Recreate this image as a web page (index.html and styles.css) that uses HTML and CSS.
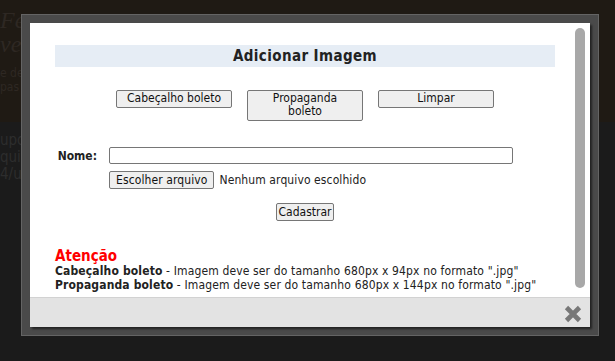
FILE: index.html
```html
<!DOCTYPE html>
<html lang="pt-BR">
<head>
<meta charset="utf-8">
<title>Adicionar Imagem</title>
<link rel="stylesheet" href="styles.css">
</head>
<body>
<div class="page">
  <div class="page-hero">
    <div class="hero-title">Fe</div>
    <div class="hero-title hero-title-2">ver</div>
    <div class="hero-sub">e desc<br>pas d</div>
  </div>
  <div class="page-body">
    <p>upo<br>quiv<br>4/up</p>
  </div>
</div>

<div class="modal">
  <div class="panel">
    <div class="scroll-area">
      <div class="content">
        <h2 class="title">Adicionar Imagem</h2>
        <div class="btn-row">
          <button class="btn btn-wide" type="button">Cabeçalho boleto</button>
          <button class="btn btn-wide" type="button">Propaganda<br>boleto</button>
          <button class="btn btn-wide" type="button">Limpar</button>
        </div>
        <form class="form">
          <div class="form-grid">
            <label class="label" for="nome">Nome:</label>
            <input class="text-input" id="nome" type="text">
            <span></span>
            <div class="file-row">
              <button class="btn btn-file" type="button">Escolher arquivo</button>
              <span class="file-name">Nenhum arquivo escolhido</span>
            </div>
          </div>
          <div class="submit-row">
            <button class="btn btn-submit" type="button">Cadastrar</button>
          </div>
        </form>
        <div class="notice">
          <div class="notice-title">Atenção</div>
          <div class="notice-line"><b>Cabeçalho boleto</b> - Imagem deve ser do tamanho 680px x 94px no formato ".jpg"</div>
          <div class="notice-line"><b>Propaganda boleto</b> - Imagem deve ser do tamanho 680px x 144px no formato ".jpg"</div>
        </div>
      </div>
      <div class="scrollbar"><div class="thumb"></div></div>
    </div>
    <div class="footer">
      <svg class="close" width="18" height="18" viewBox="0 0 18 18" aria-label="Fechar">
        <path d="M2.5 2.5 L15.5 15.5 M15.5 2.5 L2.5 15.5" stroke="#777" stroke-width="4.6" stroke-linecap="butt"/>
      </svg>
    </div>
  </div>
</div>
</body>
</html>
```
FILE: styles.css
```css
* { box-sizing: border-box; }
html, body { margin: 0; padding: 0; }
body {
  width: 615px;
  height: 361px;
  overflow: hidden;
  background: #1b1b1b;
  font-family: "DejaVu Sans Condensed", "DejaVu Sans", sans-serif;
  font-size: 12px;
  color: #222;
  position: relative;
}
.page-hero {
  height: 122px;
  background: #1f1a14;
  padding: 8px 0 0 0;
  color: #2e2823;
}
.hero-title {
  font-family: "Liberation Serif", serif;
  font-style: italic;
  font-size: 24px;
  line-height: 24px;
  height: 24px;
}
.hero-sub { margin-top: 10px; font-size: 12px; line-height: 14px; }
.page-body { color: #2d2d2d; font-size: 15px; line-height: 17px; padding-top: 10px; }
.page-body p { margin: 0; }

.modal {
  position: absolute;
  left: 21px;
  top: 14px;
  width: 578px;
  height: 322px;
  background: #4a4a4a;
  border: 1px solid #646464;
  padding: 8px;
}
.panel {
  width: 560px;
  height: 304px;
  background: #fff;
  display: flex;
  flex-direction: column;
  box-shadow: 2px 2px 2px rgba(0,0,0,0.55);
}
.scroll-area {
  flex: 1;
  display: flex;
  min-height: 0;
}
.content {
  flex: 1;
  padding: 22px 0 0 25px;
}
.title {
  margin: 0;
  width: 500px;
  height: 22px;
  background: #e6edf5;
  font-size: 15px;
  font-weight: bold;
  text-align: center;
  line-height: 22px;
  letter-spacing: 0.4px;
  color: #222;
}
.btn {
  font-family: inherit;
  font-size: 12px;
  color: #111;
  background: #efefef;
  border: 1px solid #767676;
  border-radius: 2px;
  padding: 0 6px;
  line-height: 13px;
  margin: 0;
}
.btn-row {
  width: 500px;
  display: flex;
  justify-content: center;
  align-items: flex-start;
  gap: 15px;
  margin-top: 23px;
}
.btn-wide { width: 116px; min-height: 18px; padding: 1px 6px 2px; }
.form { width: 500px; margin-top: 26px; }
.form-grid {
  display: grid;
  grid-template-columns: 54px 1fr;
  column-gap: 0;
  row-gap: 7px;
  align-items: center;
}
.label { font-weight: bold; text-align: right; padding-right: 12px; font-size: 12px; }
.text-input {
  width: 404px;
  height: 17px;
  border: 1px solid #767676;
  border-radius: 2px;
  padding: 0 2px;
  font-family: inherit;
  margin: 0;
}
.file-row { display: flex; align-items: center; gap: 5px; }
.btn-file { height: 18px; padding: 0 6px; letter-spacing: 0.1px; }
.file-name { font-size: 12px; color: #222; letter-spacing: 0.1px; }
.submit-row { width: 500px; display: flex; justify-content: center; margin-top: 14px; }
.btn-submit { height: 18px; padding: 0 2px; }
.notice { margin-top: 27px; }
.notice-title { color: #f00; font-weight: bold; font-size: 15px; line-height: 16px; }
.notice-line { line-height: 14px; font-size: 12px; white-space: nowrap; letter-spacing: 0.14px; }
.notice-line b { color: #222; }
.scrollbar {
  width: 15px;
  padding: 5px 5px 9px 0;
  display: flex;
}
.thumb {
  flex: 1;
  background: #a8a8a8;
  border-radius: 5px;
}
.footer {
  height: 30px;
  background: #e3e3e3;
  border-top: 1px solid #d2d2d2;
  display: flex;
  justify-content: flex-end;
  align-items: center;
  padding-right: 8px;
}
.close { display: block; margin-top: 3px; }
```
